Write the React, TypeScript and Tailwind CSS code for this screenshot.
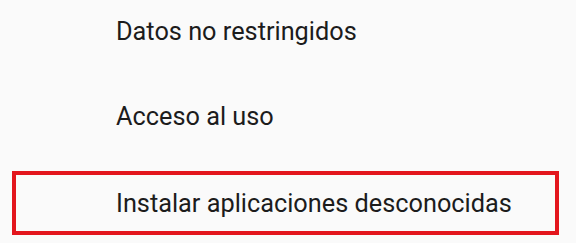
const items = ["Datos no restringidos", "Acceso al uso"];

export default function App() {
  return (
    <div
      className="flex h-[243px] w-[576px] flex-col overflow-hidden bg-[#fafafa] text-[25.3px] leading-[30px] text-[#1c1c1c]"
      style={{ fontFamily: "Roboto, 'Liberation Sans', sans-serif" }}
    >
      {items.map((label, index) => (
        <div
          key={label}
          className={index === 0 ? "pl-[116px] pt-[17px] pb-[55px]" : "pl-[116px] pb-[39px]"}
        >
          {label}
        </div>
      ))}
      <div className="ml-[12px] mr-[17px] border-4 border-[#e3161d] pl-[100px] pt-[14px] pb-[12px]">
        Instalar aplicaciones desconocidas
      </div>
    </div>
  );
}
